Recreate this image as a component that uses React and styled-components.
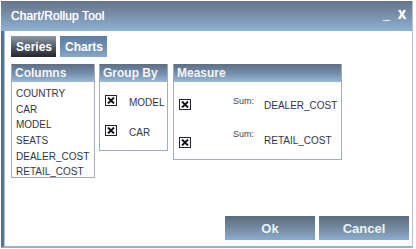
import React from "react";
import styled, { createGlobalStyle } from "styled-components";

const GlobalStyle = createGlobalStyle`
  html, body {
    margin: 0;
    padding: 0;
    background: #ffffff;
    font-family: "Liberation Sans", Arial, sans-serif;
  }
`;

const StyledWindow = styled.div`
  box-sizing: border-box;
  margin: 1px 0 0 1px;
  width: 412px;
  height: 247px;
  display: flex;
  flex-direction: column;
  background: #ffffff;
  border-left: 3px solid #5a7190;
  border-right: 1px solid #b4c0cc;
  border-bottom: 2px solid #8fb1d6;
  box-shadow: inset 1px 0 0 #a9c0da;
`;

const StyledTitleBar = styled.div`
  height: 30px;
  margin-left: -3px;
  padding: 0 6px 0 10px;
  display: flex;
  align-items: center;
  justify-content: space-between;
  background: linear-gradient(180deg, #66748a 0%, #7a91aa 50%, #8fb2d4 100%);
  color: #ffffff;
  font-size: 12px;
  letter-spacing: 0.1px;
  text-shadow: 0 0 0.8px #ffffff;
`;

const StyledWinButtons = styled.div`
  display: flex;
  align-items: flex-end;
  gap: 8px;
  font-weight: bold;
  font-size: 12px;
  line-height: 1;
  padding-bottom: 2px;
  text-shadow: 0 0 1px #ffffff;
`;

const StyledBody = styled.div`
  flex: 1;
  display: flex;
  flex-direction: column;
  padding: 5px 3px 6px 7px;
`;

const StyledTabs = styled.div`
  display: flex;
  gap: 4px;
`;

const StyledTab = styled.div`
  height: 21px;
  padding: 0 4px 0 5px;
  display: flex;
  align-items: center;
  color: #ffffff;
  font-size: 12px;
  font-weight: bold;
  background: ${({ active }) =>
    active
      ? "linear-gradient(180deg, #8e98a6 0%, #555d6a 50%, #22252c 100%)"
      : "linear-gradient(180deg, #5e7e9f 0%, #6f8dae 50%, #86a6c8 100%)"};
`;

const StyledPanels = styled.div`
  margin-top: 7px;
  display: flex;
  align-items: flex-start;
`;

const StyledPanel = styled.div`
  box-sizing: border-box;
  width: ${({ w }) => w}px;
  height: ${({ h }) => h}px;
  margin-right: ${({ gap }) => gap || 0}px;
  border: 1px solid #a3adb9;
  border-top: none;
  display: flex;
  flex-direction: column;
  overflow: hidden;
`;

const StyledPanelHeader = styled.div`
  flex: none;
  height: 18px;
  padding-left: 4px;
  display: flex;
  align-items: center;
  margin: 0 -1px;
  color: #f4f6f8;
  font-size: 12px;
  font-weight: bold;
  background: linear-gradient(180deg, #5d6e84 0%, #7690ad 55%, #9ab9da 100%);
`;

const StyledColumnList = styled.ul`
  list-style: none;
  margin: 0;
  padding: 4px 0 0 4px;
`;

const StyledColumnItem = styled.li`
  height: 15.7px;
  line-height: 15.7px;
  font-size: 10px;
  color: #2f3744;
`;

const StyledRows = styled.div`
  flex: none;
  padding-top: ${({ top }) => top}px;
`;

const StyledCheckRow = styled.div`
  height: ${({ h }) => h}px;
  display: flex;
  align-items: center;
  padding-left: 5px;
  color: #2f3744;
  font-size: 10px;
`;

const StyledCheck = styled.span`
  box-sizing: border-box;
  flex: none;
  width: 12px;
  height: 11px;
  border: 1px solid #1f2630;
  display: flex;
  align-items: center;
  justify-content: center;
  background: #ffffff;
`;

const StyledLabel = styled.span`
  margin-left: ${({ left }) => left}px;
  margin-top: ${({ down }) => down || 0}px;
`;

const StyledSum = styled.span`
  margin-left: 42px;
  font-size: 9px;
  color: #3c4450;
  margin-top: ${({ up }) => -up}px;
`;

const StyledFooter = styled.div`
  margin-top: auto;
  display: flex;
  justify-content: flex-end;
  gap: 4px;
`;

const StyledButton = styled.div`
  width: 90px;
  height: 24px;
  display: flex;
  align-items: center;
  justify-content: center;
  color: #eef2f6;
  font-size: 13px;
  font-weight: bold;
  background: linear-gradient(180deg, #5a6a7f 0%, #72899f 50%, #8cadd0 100%);
`;

function Check() {
  return (
    <StyledCheck>
      <svg width="8" height="7" viewBox="0 0 8 7">
        <path d="M1 0.6 L7 6.4 M7 0.6 L1 6.4" stroke="#111" strokeWidth="2" />
      </svg>
    </StyledCheck>
  );
}

const columns = ["COUNTRY", "CAR", "MODEL", "SEATS", "DEALER_COST", "RETAIL_COST"];
const groups = ["MODEL", "CAR"];
const measures = [
  { name: "DEALER_COST", sumUp: 7, down: 3 },
  { name: "RETAIL_COST", sumUp: 16, down: -4 },
];

function App() {
  return (
    <>
      <GlobalStyle />
      <StyledWindow>
        <StyledTitleBar>
          <span>Chart/Rollup Tool</span>
          <StyledWinButtons>
            <span>_</span>
            <span>X</span>
          </StyledWinButtons>
        </StyledTitleBar>
        <StyledBody>
          <StyledTabs>
            <StyledTab active>Series</StyledTab>
            <StyledTab>Charts</StyledTab>
          </StyledTabs>
          <StyledPanels>
            <StyledPanel w={84} h={114} gap={4}>
              <StyledPanelHeader>Columns</StyledPanelHeader>
              <StyledColumnList>
                {columns.map(c => (
                  <StyledColumnItem key={c}>{c}</StyledColumnItem>
                ))}
              </StyledColumnList>
            </StyledPanel>
            <StyledPanel w={69} h={87} gap={5}>
              <StyledPanelHeader>Group By</StyledPanelHeader>
              <StyledRows top={3}>
                {groups.map(g => (
                  <StyledCheckRow key={g} h={30}>
                    <Check />
                    <StyledLabel left={12} down={4}>{g}</StyledLabel>
                  </StyledCheckRow>
                ))}
              </StyledRows>
            </StyledPanel>
            <StyledPanel w={169} h={96}>
              <StyledPanelHeader>Measure</StyledPanelHeader>
              <StyledRows top={3}>
                {measures.map(m => (
                  <StyledCheckRow key={m.name} h={38}>
                    <Check />
                    <StyledSum up={m.sumUp}>Sum:</StyledSum>
                    <StyledLabel left={10} down={m.down}>{m.name}</StyledLabel>
                  </StyledCheckRow>
                ))}
              </StyledRows>
            </StyledPanel>
          </StyledPanels>
          <StyledFooter>
            <StyledButton>Ok</StyledButton>
            <StyledButton>Cancel</StyledButton>
          </StyledFooter>
        </StyledBody>
      </StyledWindow>
    </>
  );
}

export default App;
